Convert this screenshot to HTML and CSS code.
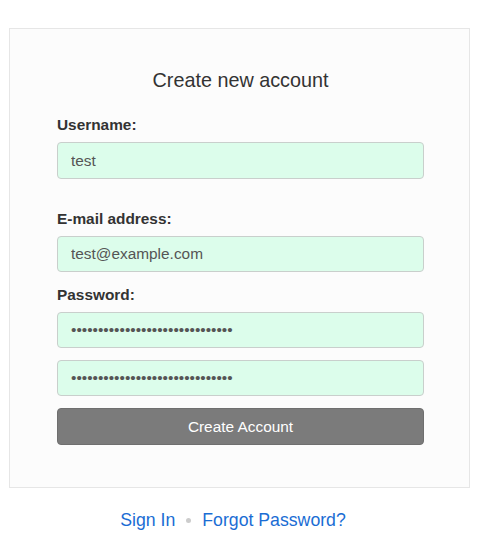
FILE: index.html
```html
<!DOCTYPE html>
<html lang="en">
<head>
<meta charset="utf-8">
<title>Create new account</title>
<link rel="stylesheet" href="styles.css">
</head>
<body>
<div class="card">
  <h1 class="title">Create new account</h1>
  <form class="form">
    <label class="label" for="u">Username:</label>
    <input class="field field-first" id="u" type="text" value="test">
    <label class="label label-email" for="e">E-mail address:</label>
    <input class="field" id="e" type="text" value="test@example.com">
    <label class="label label-pass" for="p">Password:</label>
    <input class="field" id="p" type="password" value="abcdefghijabcdefghijabcdefghij">
    <input class="field field-gap" id="p2" type="password" value="abcdefghijabcdefghijabcdefghij">
    <button class="btn" type="button">Create Account</button>
  </form>
</div>
<div class="links">
  <a class="link" href="#">Sign In</a>
  <span class="sep"></span>
  <a class="link" href="#">Forgot Password?</a>
</div>
</body>
</html>
```
FILE: styles.css
```css
html, body {
  margin: 0;
  padding: 0;
  background: #ffffff;
}
body {
  font-family: "Liberation Sans", Arial, sans-serif;
  color: #333333;
}
.card {
  box-sizing: border-box;
  width: 461px;
  margin: 28px 0 0 9px;
  height: 460px;
  background: #fcfcfc;
  border: 1px solid #e6e6e6;
  padding: 39px 45px 0 47px;
}
.title {
  margin: 0;
  font-size: 19.8px;
  line-height: 24px;
  font-weight: normal;
  text-align: center;
  color: #333333;
}
.form {
  display: flex;
  flex-direction: column;
  margin-top: 23px;
}
.label {
  display: block;
  font-size: 15.4px;
  line-height: 20px;
  font-weight: bold;
  color: #333333;
  margin-bottom: 7px;
}
.label-email {
  margin-top: 30px;
}
.label-pass {
  margin-top: 13px;
}
.field {
  box-sizing: border-box;
  width: 100%;
  height: 36px;
  margin: 0;
  padding: 0 13px;
  font-family: "Liberation Sans", Arial, sans-serif;
  font-size: 15.4px;
  color: #555555;
  background: #dcfdeb;
  border: 1px solid #c9cfcc;
  border-radius: 4px;
  outline: none;
}
.field-first {
  height: 37px;
}
.field-gap {
  margin-top: 12px;
}
.btn {
  box-sizing: border-box;
  width: 100%;
  height: 37px;
  margin-top: 12px;
  font-family: "Liberation Sans", Arial, sans-serif;
  font-size: 15.4px;
  color: #ffffff;
  background: #7b7b7b;
  border: 1px solid #6f6f6f;
  border-radius: 4px;
}
.links {
  display: flex;
  justify-content: center;
  align-items: center;
  gap: 11px;
  margin-top: 20px;
  padding-right: 18px;
  font-size: 17.7px;
  line-height: 24px;
}
.link {
  color: #1a6dd4;
  text-decoration: none;
}
.sep {
  width: 5px;
  height: 5px;
  border-radius: 50%;
  background: #cccccc;
}
```
